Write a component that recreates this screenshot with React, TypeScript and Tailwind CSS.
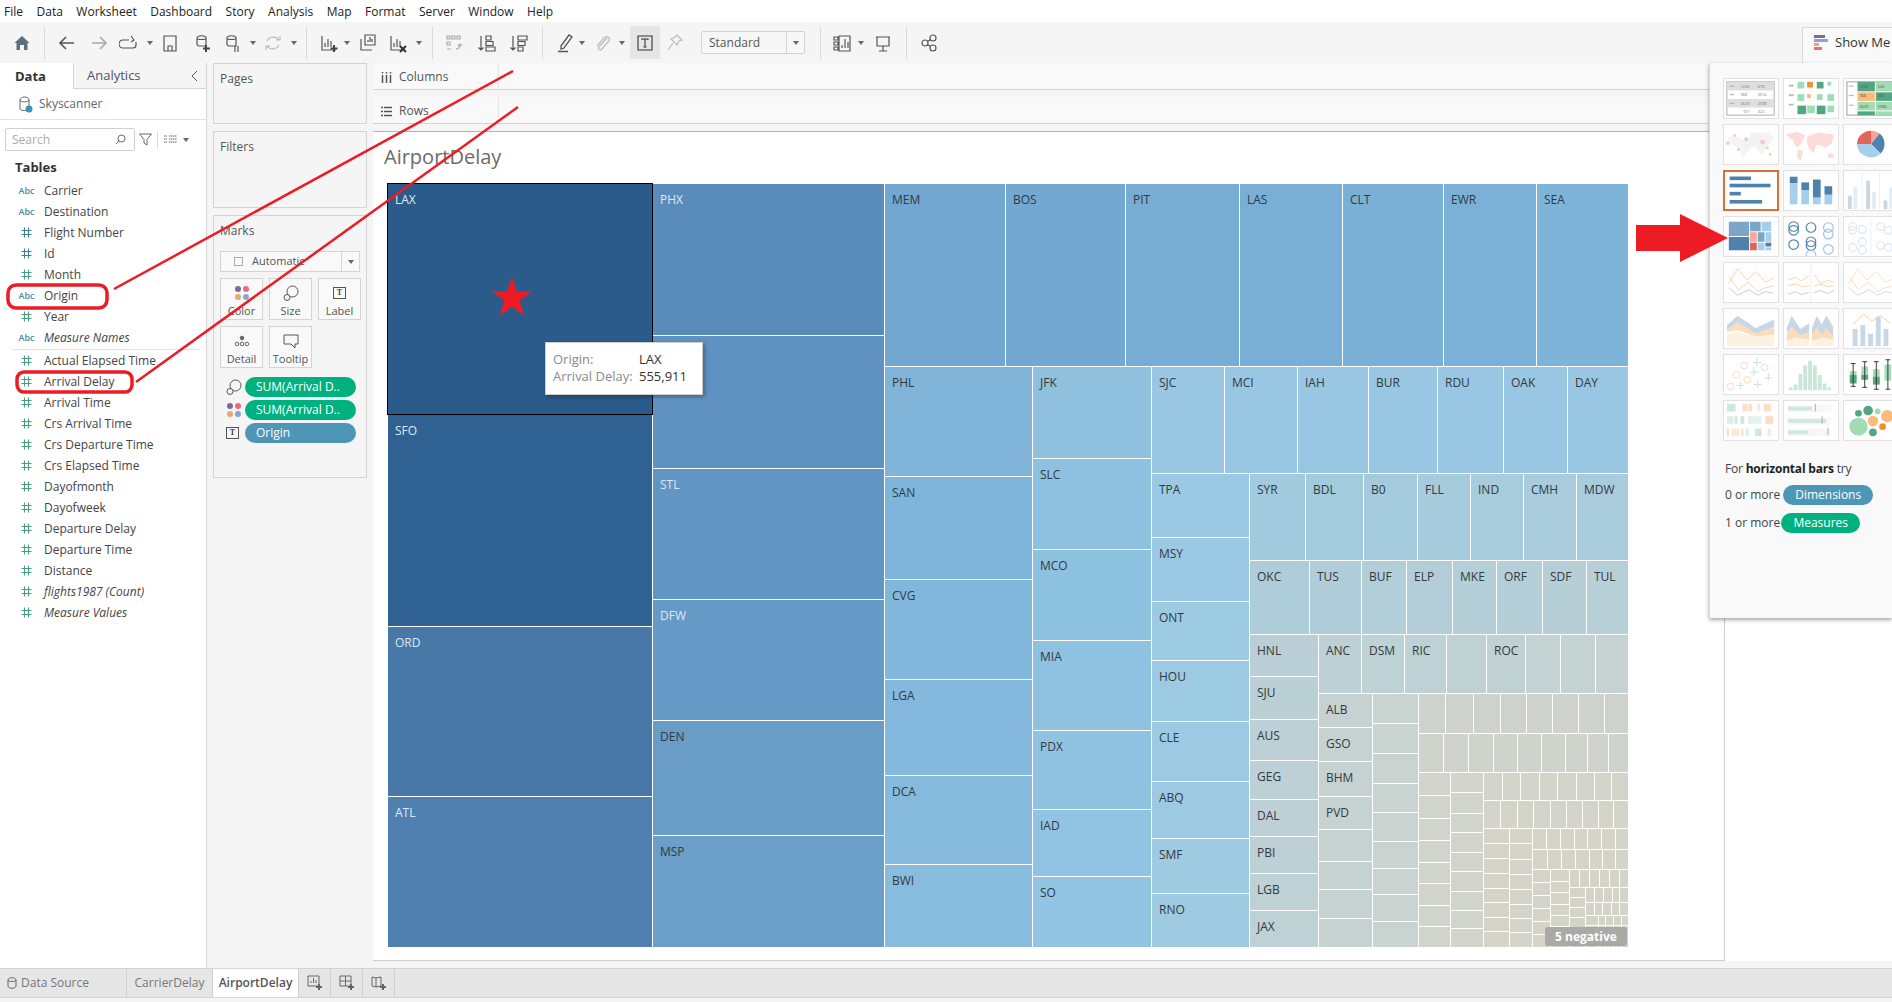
import type { ReactNode } from "react";

type Cell = { x: number; y: number; x2: number; y2: number; c: string; t?: string; light?: boolean };

const cells: Cell[] = [];

function rowOf(y: number, y2: number, xs: number[], colors: string | string[], labels: string[] = []) {
  for (let i = 0; i < xs.length - 1; i++) {
    const c = typeof colors === "string" ? colors : colors[i];
    cells.push({ x: xs[i], y, x2: xs[i + 1], y2, c, t: labels[i] });
  }
}

function colOf(x: number, x2: number, ys: number[], colors: string | string[], labels: string[] = [], light = 0) {
  for (let i = 0; i < ys.length - 1; i++) {
    const c = typeof colors === "string" ? colors : colors[i];
    cells.push({ x, y: ys[i], x2, y2: ys[i + 1], c, t: labels[i], light: i < light });
  }
}

// the bottom right corner was read off a 3x crop starting at 1240,620
const zx = (v: number[]) => v.map((n) => 1240 + n / 3);
const zy = (v: number[]) => v.map((n) => 620 + n / 3);
function zRow(y: number, y2: number, xs: number[], c: string, labels: string[] = []) {
  rowOf(620 + y / 3, 620 + y2 / 3, zx(xs), c, labels);
}
function zCol(x: number, x2: number, ys: number[], c: string, labels: string[] = []) {
  colOf(1240 + x / 3, 1240 + x2 / 3, zy(ys), c, labels);
}

colOf(388, 653, [184, 415, 627, 797, 947], ["#2b5b8a", "#2f6292", "#4878a8", "#4f80b0"], ["LAX", "SFO", "ORD", "ATL"], 4);
colOf(653, 885, [184, 336, 469, 600, 721, 836, 947], ["#5a8cbb", "#5f92c1", "#6195c3", "#6599c6", "#699cc7", "#6b9ec9"], ["PHX", "", "STL", "DFW", "DEN", "MSP"], 4);
rowOf(184, 367, [885, 1006, 1126, 1240, 1343, 1444, 1537, 1628], ["#71a7d0", "#72a8d1", "#77acd3", "#7aafd5", "#7bb0d6", "#7cb1d7", "#7fb4d9"], ["MEM", "BOS", "PIT", "LAS", "CLT", "EWR", "SEA"]);
colOf(885, 1033, [367, 477, 580, 680, 776, 865, 947], ["#80b5d9", "#7fb5da", "#82b7dc", "#84b9dd", "#86badd", "#88bcdf"], ["PHL", "SAN", "CVG", "LGA", "DCA", "BWI"]);
colOf(1033, 1152, [367, 459, 550, 641, 731, 810, 877, 947], ["#8fc1df", "#8ec1e0", "#8dc1e0", "#8fc2e1", "#90c3e2", "#91c3e3", "#92c4e3"], ["JFK", "SLC", "MCO", "MIA", "PDX", "IAD", "SO"]);
rowOf(367, 474, [1152, 1225, 1298, 1369, 1438, 1504, 1568, 1628], "#99c7e3", ["SJC", "MCI", "IAH", "BUR", "RDU", "OAK", "DAY"]);
colOf(1152, 1250, [474, 538, 602, 661, 722, 782, 839, 894, 947], ["#9bc9e3", "#9bc9e3", "#9ccae3", "#9ccae3", "#9dcae2", "#9dcae2", "#9ecbe2", "#9fcbe2"], ["TPA", "MSY", "ONT", "HOU", "CLE", "ABQ", "SMF", "RNO"]);
rowOf(474, 561, [1250, 1306, 1364, 1418, 1471, 1524, 1577, 1628], ["#a2cade", "#a3cbde", "#a4cbdd", "#a5cbdd", "#a7ccdc", "#a8ccdc", "#a9ccdc"], ["SYR", "BDL", "B0", "FLL", "IND", "CMH", "MDW"]);
rowOf(561, 635, [1250, 1310, 1362, 1407, 1453, 1497, 1543, 1587, 1628], ["#adcdda", "#b0ced9", "#b2ced8", "#b3ced8", "#b4cfd8", "#b5cfd8", "#b6cfd7", "#b7cfd7"], ["OKC", "TUS", "BUF", "ELP", "MKE", "ORF", "SDF", "TUL"]);
colOf(1250, 1318.5, [635, 677, 720, 761, 800, 837, 874, 911, 947], ["#b9cfd5", "#bbd0d5", "#bcd0d5", "#bcd0d5", "#bdd0d5", "#bdd0d5", "#bed1d5", "#bed1d5"], ["HNL", "SJU", "AUS", "GEG", "DAL", "PBI", "LGB", "JAX"]);
rowOf(635, 693.5, [1318.5, 1361.5, 1404.5, 1446.5, 1486.5, 1525.5, 1560.5, 1595.5, 1628], ["#bdd0d5", "#bed1d5", "#bed1d5", "#c0d1d4", "#c0d1d3", "#c3d2d2", "#c4d2d2", "#c5d2d1"], ["ANC", "DSM", "RIC", "", "ROC"]);
zCol(236, 398, [221, 325, 427, 532, 631, 727, 811, 898, 981], "#c6d2d1", ["ALB", "GSO", "BHM", "PVD"]);
zCol(398, 536, [221, 313, 403, 493, 580, 667, 748, 826, 905, 981], "#c9d3cf");
zRow(221, 343, [536, 617, 701, 782, 860, 938, 1016, 1094, 1164], "#cdd3cc");
zRow(343, 460, [536, 611, 686, 761, 833, 905, 977, 1043, 1106, 1164], "#cfd3cb");
zCol(536, 634, [460, 529, 598, 664, 730, 793, 859, 922, 981], "#d1d4ca");
zCol(634, 731, [460, 520, 583, 640, 700, 757, 817, 874, 928, 981], "#d1d4ca");
zRow(460, 544, [731, 788, 842, 899, 953, 1010, 1064, 1116, 1164], "#d3d4c9");
zRow(544, 626, [731, 782, 833, 881, 932, 980, 1028, 1077, 1122, 1164], "#d4d4c9");
zCol(731, 809, [626, 673, 718, 763, 808, 850, 895, 937, 981], "#d4d4c9");
zCol(809, 878, [626, 673, 721, 766, 811, 856, 898, 940, 981], "#d4d4c9");
zRow(626, 691, [878, 920, 962, 1004, 1043, 1085, 1128, 1164], "#d4d4c9");
zRow(691, 751, [878, 923, 965, 1007, 1049, 1088, 1128, 1164], "#d4d4c9");
zCol(878, 932, [751, 790, 829, 868, 907, 946, 981], "#d4d4c9");
zCol(932, 989, [751, 787, 820, 856, 889, 922, 952, 981], "#d4d4c9");
zRow(751, 805, [989, 1019, 1049, 1079, 1109, 1139, 1164], "#d4d4c9");
zCol(989, 1037, [805, 835, 865, 895, 925, 955, 981], "#d4d4c9");
zRow(805, 850, [1037, 1066, 1093, 1118, 1141, 1164], "#d4d4c9");
zRow(850, 889, [1037, 1064, 1088, 1115, 1139, 1164], "#d4d4c9");
zRow(889, 918, [1037, 1076, 1099, 1123, 1145, 1164], "#d4d4c9");
zRow(918, 981, [1037, 1076, 1099, 1123, 1145, 1164], "#d4d4c9");

function Treemap() {
  return (
    <svg width={1240} height={763} viewBox="388 184 1240 763" className="overflow-visible text-[12px]">
      {cells.map((k, i) => {
        const x = Math.round(k.x);
        const y = Math.round(k.y);
        const x2 = Math.round(k.x2);
        const y2 = Math.round(k.y2);
        return (
          <g key={i}>
            <rect x={x} y={y} width={x2 - x - (x2 >= 1628 ? 0 : 1)} height={y2 - y - (y2 >= 947 ? 0 : 1)} fill={k.c} />
            {k.t ? (
              <text x={x + 7} y={y + 20} fill={k.light ? "#dfe8f1" : "#333a40"}>
                {k.t}
              </text>
            ) : null}
          </g>
        );
      })}
      <rect x={387.5} y={183.5} width={265} height={231} fill="none" stroke="#000" strokeWidth={1} />
    </svg>
  );
}

function Hash({ color = "#4d9a82" }: { color?: string }) {
  return (
    <svg width={11} height={11} viewBox="0 0 11 11" stroke={color} strokeWidth={1.1}>
      <path d="M3.5 0.5v10M7.5 0.5v10M0.5 3.5h10M0.5 7.5h10" />
    </svg>
  );
}

function Abc() {
  return <span className="text-[9px] font-semibold text-[#4a87a3] leading-none">Abc</span>;
}

function Field({ name, kind, italic }: { name: string; kind: "abc" | "hash" | "blue"; italic?: boolean }) {
  return (
    <div className="flex items-center h-[21px]">
      <span className="w-[44px] pl-[18px] flex justify-center pr-[9px] shrink-0">
        {kind === "abc" ? <Abc /> : <Hash color={kind === "blue" ? "#3f7f95" : "#4d9a82"} />}
      </span>
      <span className={italic ? "italic text-[#444]" : "text-[#444]"}>{name}</span>
    </div>
  );
}

function ColorDots() {
  return (
    <svg width={16} height={16} viewBox="0 0 16 16">
      <circle cx={4} cy={4} r={3} fill="#7b6a9b" />
      <circle cx={12} cy={4} r={3} fill="#ef6a7d" />
      <circle cx={4} cy={12} r={3} fill="#f2a66f" />
      <circle cx={12} cy={12} r={3} fill="#84a6cf" />
    </svg>
  );
}

function SizeIcon() {
  return (
    <svg width={16} height={16} viewBox="0 0 16 16" fill="none" stroke="#555" strokeWidth={1}>
      <circle cx={9.5} cy={6.5} r={5.5} />
      <circle cx={4} cy={12.5} r={3} fill="#f5f5f5" />
    </svg>
  );
}

function LabelIcon() {
  return (
    <span className="w-[13px] h-[12px] border border-[#555] flex items-center justify-center text-[8px] font-['Liberation_Serif',serif] font-bold text-[#444] leading-none">
      T
    </span>
  );
}

function MarkBtn({ name, icon }: { name: string; icon: ReactNode }) {
  return (
    <div className="w-[43px] h-[42px] border border-[#d4d4d4] bg-[#f9f9f9] flex flex-col items-center justify-between pt-[6px] pb-[3px] text-[11px] text-[#555] leading-none">
      <span className="h-[16px] flex items-center justify-center">{icon}</span>
      <span>{name}</span>
    </div>
  );
}

function Pill({ text, green, icon }: { text: string; green?: boolean; icon: ReactNode }) {
  return (
    <div className="flex items-center h-[20px] mb-[3px]">
      <span className="w-[25px] pl-[6px] shrink-0 flex items-center">{icon}</span>
      <span
        className={
          green
            ? "w-[111px] h-[20px] rounded-full bg-[#00b180] text-white pl-[11px] leading-[20px]"
            : "w-[111px] h-[20px] rounded-full bg-[#4e96b5] text-white pl-[11px] leading-[20px]"
        }
      >
        {text}
      </span>
    </div>
  );
}

function Caret({ w = 8 }: { w?: number }) {
  return (
    <span className="flex justify-center shrink-0" style={{ width: w }}>
      <svg width={6} height={4} viewBox="0 0 6 4" fill="#666" className="shrink-0">
        <path d="M0 0h6L3 4z" />
      </svg>
    </span>
  );
}

function Sep() {
  return <span className="w-px h-[32px] bg-[#d9d9d9] shrink-0" />;
}

function Ico({ w, children }: { w: number; children: ReactNode }) {
  return (
    <span className="flex justify-center items-center shrink-0" style={{ width: w }}>
      <svg width={20} height={20} viewBox="0 0 20 20" fill="none" stroke="#555" strokeWidth={1.2}>
        {children}
      </svg>
    </span>
  );
}

function Toolbar() {
  return (
    <div className="h-[41px] bg-[#f5f5f5] flex items-center shrink-0 relative">
      <Ico w={44}>
        <path d="M2.500 10 10 3l7.500 7h-2v7h-3.500v-5h-4v5H4.500v-7z" fill="#5b6f80" stroke="none" />
      </Ico>
      <Sep />
      <Ico w={44}>
        <path d="M17 10H3M9 4l-6 6 6 6" strokeWidth={1.6} stroke="#555" />
      </Ico>
      <Ico w={20}>
        <path d="M3 10h14M11 4l6 6-6 6" strokeWidth={1.6} stroke="#aaa" />
      </Ico>
      <Ico w={40}>
        <path d="M10 7H4a3 3 0 0 0 0 8h10a3 3 0 0 0 3-3V9M12 3l3 4-3 2" />
      </Ico>
      <Caret w={2} />
      <Ico w={38}>
        <path d="M4 3h12v15H4zM8 18v-5h4v5" />
      </Ico>
      <Ico w={28}>
        <path d="M4 5c0-3 9-3 9 0v8H8c-2 0-4 0-4-2zM4 5c0 2 9 2 9 0" />
        <path d="M13 12v7M10 15.500h7" strokeWidth={2} stroke="#444" />
      </Ico>
      <Ico w={32}>
        <path d="M4 5c0-3 9-3 9 0v8H8c-2 0-4 0-4-2zM4 5c0 2 9 2 9 0" />
        <path d="M12 13v6M15 13v6" />
      </Ico>
      <Caret w={8} />
      <Ico w={32}>
        <path d="M16 7A7 7 0 0 0 4 8M4 13a7 7 0 0 0 12-1M13 7h4V3M7 13H3v4" stroke="#bbb" />
      </Ico>
      <Caret w={10} />
      <span className="w-[7px] shrink-0" />
      <Sep />
      <span className="w-[6px] shrink-0" />
      <Ico w={32}>
        <path d="M3 3v14h14M6 14v-4M9 14V6M12 14V8" />
        <path d="M15 12v7M11.500 15.500h7" strokeWidth={2} stroke="#444" />
      </Ico>
      <Caret w={4} />
      <Ico w={38}>
        <path d="M7 2h10v10H7zM3 6v11h11M10 9V7M12 9V4M14 9V6" />
      </Ico>
      <Ico w={22}>
        <path d="M3 3v14h14M6 14v-4M9 14V6M12 14V8" />
        <path d="m12 13 6 6M18 13l-6 6" strokeWidth={2} stroke="#333" />
      </Ico>
      <Caret w={20} />
      <span className="w-[3px] shrink-0" />
      <Sep />
      <Ico w={42}>
        <path d="M3 3h3v3H3zM8 3h3v3H8zM13 3h3v3h-3zM3 9h3v3H3zM12 16c3 0 4-2 4-5M14 13l2-2 2 2M7 16H3" stroke="#aaa" />
      </Ico>
      <Ico w={24}>
        <path d="M4 3v14M1.500 14.500 4 17l2.500-2.500M9 3h5v4H9zM9 8.500h7v4H9zM9 14h9v4H9z" />
      </Ico>
      <Ico w={40}>
        <path d="M4 3v14M1.500 14.500 4 17l2.500-2.500M9 3h9v4H9zM9 8.500h7v4H9zM9 14h5v4H9z" />
      </Ico>
      <span className="w-[3px] shrink-0" />
      <Sep />
      <span className="w-[6px] shrink-0" />
      <Ico w={32}>
        <path d="M6 13 14 2l3 2-8 11-3 1zM3 18.500h10" strokeWidth={1.3} />
      </Ico>
      <Caret w={2} />
      <Ico w={38}>
        <path d="m15 5-8 9c-2 2 1 4 3 2l7-8c2-3-2-6-5-3l-7 8" stroke="#bbb" />
      </Ico>
      <Caret w={2} />
      <span className="w-[30px] h-[33px] ml-[7px] bg-[#e6e6e6] flex items-center justify-center shrink-0">
        <svg width={16} height={16} viewBox="0 0 16 16" fill="none" stroke="#333" strokeWidth={1.1}>
          <path d="M1 1h14v14H1zM5 5V4h6v1M8 4v8M6.500 12h3" />
        </svg>
      </span>
      <Ico w={30}>
        <path d="m12 2 5 5-3 1-2 4-6-6 4-2zM8 10l-5 7" stroke="#bbb" />
      </Ico>
      <div className="ml-[11px] w-[104px] h-[23px] border border-[#d4d4d4] rounded-[2px] flex items-center text-[#555] bg-[#f7f7f7] shrink-0">
        <span className="pl-[7px] flex-1">Standard</span>
        <span className="w-[18px] h-full border-l border-[#d4d4d4] flex items-center justify-center">
          <Caret />
        </span>
      </div>
      <span className="w-[15px] shrink-0" />
      <Sep />
      <span className="w-[5px] shrink-0" />
      <Ico w={34}>
        <path d="M1 4h4v3H1zM1 9h4v3H1zM1 14h4v3H1zM6 3h11v15H6zM9 15v-3M12 15V6M15 15V9" />
      </Ico>
      <Caret w={2} />
      <Ico w={42}>
        <path d="M3 4h14M4 4v9h12V4M10 13v5M6 18h8" />
      </Ico>
      <span className="w-[2px] shrink-0" />
      <Sep />
      <Ico w={44}>
        <circle cx={6} cy={10} r={3} />
        <circle cx={14} cy={5} r={3} />
        <circle cx={14} cy={15} r={3} />
        <path d="m8.500 8.500 3-2M8.500 11.500l3 2" />
      </Ico>
      <div className="absolute right-0 bottom-0 w-[90px] h-[36px] bg-[#f9f9f9] border-l border-t border-[#d9d9d9] flex items-center pl-[11px] pb-[6px] text-[13px] text-[#333]">
        <svg width={15} height={16} viewBox="0 0 15 16" className="mr-[6px] shrink-0">
          <rect x={0} y={0} width={11} height={3} fill="#7b6a9b" />
          <rect x={0} y={4} width={14} height={3} fill="#84a6cf" />
          <rect x={0} y={8} width={5} height={3} fill="#f2a66f" />
          <rect x={0} y={12} width={8} height={3} fill="#ef6a7d" />
        </svg>
        Show Me
      </div>
    </div>
  );
}

const B = "#4f82ab";
const LB = "#a6cfee";
const R = "#e2635a";
const GD = "#52a783";
const GL = "#a1dcb5";
const Or = "#f28e2b";
const OL = "#fbb97e";

function Thumb({ children, active }: { children: ReactNode; active?: boolean }) {
  return (
    <div className={active ? "w-[56px] h-[41px] border-2 border-[#de6c35] bg-white" : "w-[56px] h-[41px] border border-[#e2e2e2] bg-white"}>
      <svg width="100%" height="100%" viewBox="0 0 56 41" preserveAspectRatio="none" className="block">
        {children}
      </svg>
    </div>
  );
}

function Bx({ x, y, w, h, f }: { x: number; y: number; w: number; h: number; f: string }) {
  return <rect x={x} y={y} width={w} height={h} fill={f} />;
}

function Lines({ faint }: { faint?: boolean }) {
  const o = faint ? 0.45 : 0.6;
  return (
    <g fill="none" strokeWidth={1} opacity={o}>
      <path d="M5 22 14 6l10 12 9-9 10 11 9-4" stroke="#f5b77f" />
      <path d="M5 14l10 14 10-8 10 10 8-4 9-2" stroke="#f5b77f" />
      <path d="M5 26l9 8 12-6 9 6 8-4 8 2" stroke="#8fb0d1" />
    </g>
  );
}

function ShowMePanel() {
  return (
    <div className="absolute left-[1709px] top-[63px] w-[183px] h-[555px] bg-[#f9f9f9] border-l border-[#d9d9d9] shadow-[0_2px_4px_rgba(0,0,0,0.35)] overflow-hidden pl-[13px] pt-[15px]">
      <div className="grid grid-cols-[56px_56px_56px] gap-x-[4px] gap-y-[5px] w-[176px]">
        <Thumb>
          <rect x={3} y={3} width={49} height={35} fill="none" stroke="#aaa" />
          <Bx x={3} y={3} w={49} h={9} f="#dedede" />
          <Bx x={3} y={21} w={49} h={9} f="#dedede" />
          <Bx x={6} y={7} w={5} h={1} f="#aaa" />
          <Bx x={6} y={16} w={5} h={1} f="#aaa" />
          <Bx x={6} y={25} w={5} h={1} f="#aaa" />
          <g fontSize={4} fill="#777">
            <text x={17} y={9}>1234</text>
            <text x={35} y={9}>678</text>
            <text x={17} y={18}>368</text>
            <text x={35} y={18}>3014</text>
            <text x={17} y={27}>2629</text>
            <text x={35} y={27}>2598</text>
            <text x={20} y={36}>971</text>
            <text x={35} y={36}>322</text>
          </g>
        </Thumb>
        <Thumb>
          <Bx x={5} y={6} w={5} h={2} f="#bbb" />
          <Bx x={5} y={16} w={5} h={2} f="#bbb" />
          <Bx x={5} y={26} w={5} h={2} f="#bbb" />
          <Bx x={14} y={3} w={7} h={7} f={GL} />
          <Bx x={24} y={3} w={6} h={6} f={Or} />
          <Bx x={34} y={3} w={7} h={7} f={GD} />
          <Bx x={45} y={3} w={4} h={4} f={GL} />
          <Bx x={14} y={16} w={7} h={7} f={GL} />
          <Bx x={24} y={16} w={4} h={4} f={OL} />
          <Bx x={34} y={16} w={6} h={6} f={GL} />
          <Bx x={45} y={16} w={7} h={7} f={GL} />
          <Bx x={14} y={28} w={9} h={9} f={GD} />
          <Bx x={24} y={28} w={8} h={8} f={GL} />
          <Bx x={34} y={28} w={9} h={9} f={GD} />
          <Bx x={45} y={28} w={7} h={7} f={GL} />
        </Thumb>
        <Thumb>
          <rect x={3} y={3} width={52} height={35} fill="none" stroke="#999" />
          <Bx x={5} y={7} w={5} h={1} f="#aaa" />
          <Bx x={5} y={17} w={5} h={1} f="#aaa" />
          <Bx x={5} y={27} w={5} h={1} f="#aaa" />
          <Bx x={14} y={3} w={18} h={10} f={GD} />
          <Bx x={33} y={3} w={22} h={10} f={GL} />
          <Bx x={14} y={14} w={18} h={9} f={OL} />
          <Bx x={33} y={14} w={22} h={9} f={GD} />
          <Bx x={14} y={24} w={18} h={9} f={GL} />
          <Bx x={33} y={24} w={22} h={9} f={GL} />
          <Bx x={14} y={34} w={18} h={4} f={GD} />
          <Bx x={33} y={34} w={22} h={4} f={GL} />
          <g fontSize={4} fill="#555">
            <text x={16} y={9}>1234</text>
            <text x={35} y={9}>546</text>
            <text x={16} y={19}>368</text>
            <text x={35} y={19}>380</text>
            <text x={16} y={30}>2629</text>
            <text x={35} y={30}>5984</text>
          </g>
        </Thumb>
        <Thumb>
          <path d="M3 12h12l4 4 6-2 4-6h18l5 6-8 10-5 8-7-10-6 4-6 8-6-10-7-4z" fill="#f3f3f3" />
          <g fill="#f3c9c6">
            <circle cx={4} cy={19} r={2} />
            <circle cx={23} cy={15} r={2} />
            <circle cx={40} cy={18} r={2.500} />
            <circle cx={11} cy={11} r={1.500} />
            <circle cx={15} cy={26} r={1.500} />
            <circle cx={45} cy={24} r={1.500} />
            <circle cx={48} cy={31} r={1.500} />
          </g>
        </Thumb>
        <Thumb>
          <path d="M2 10 14 7l8 4-5 10-4 3-4-8zM14 26l6 1-3 11-3-4zM24 12l12-4 16 2-3 10-6 4-6-3-4 0-2 9-5-5-2-6z" fill="#fbdcdb" />
          <path d="M45 30l6 0 1 4-6 1z" fill="#fbdcdb" />
        </Thumb>
        <Thumb>
          <path d="M28 20 V6 A14.500 14.500 0 0 0 13.500 20 z" fill={R} />
          <path d="M28 20 V6 A14.500 14.500 0 0 1 37 9 z" fill="#f6a19b" />
          <path d="M28 20 L37 9 A14.500 14.500 0 0 1 38 30 z" fill={B} />
          <path d="M28 20 L38 30 A14.500 14.500 0 0 1 13.500 20 z" fill={LB} />
        </Thumb>
        <Thumb active>
          <Bx x={5} y={5} w={23} h={4} f={B} />
          <Bx x={5} y={13} w={44} h={4} f={B} />
          <Bx x={5} y={22} w={12} h={4} f={B} />
          <Bx x={5} y={31} w={35} h={4} f={B} />
        </Thumb>
        <Thumb>
          <Bx x={6} y={6} w={8} h={7} f={B} />
          <Bx x={6} y={13} w={8} h={22} f={LB} />
          <Bx x={18} y={12} w={8} h={8} f={B} />
          <Bx x={18} y={20} w={8} h={15} f={LB} />
          <Bx x={30} y={9} w={8} h={19} f={B} />
          <Bx x={30} y={28} w={8} h={7} f={LB} />
          <Bx x={42} y={16} w={8} h={9} f={B} />
          <Bx x={42} y={25} w={8} h={10} f={LB} />
        </Thumb>
        <Thumb>
          <path d="M19 1v40M37 1v40" stroke="#eee" />
          <Bx x={4} y={26} w={4} h={14} f="#c9d6e4" />
          <Bx x={10} y={17} w={4} h={23} f="#e2edf8" />
          <Bx x={23} y={10} w={4} h={30} f="#c9d6e4" />
          <Bx x={29} y={22} w={4} h={18} f="#e2edf8" />
          <Bx x={41} y={31} w={4} h={9} f="#c9d6e4" />
          <Bx x={47} y={17} w={4} h={23} f="#e2edf8" />
        </Thumb>
        <Thumb>
          <Bx x={5} y={5} w={21} h={15} f="#7ba6ca" />
          <Bx x={5} y={21} w={21} h={14} f={B} />
          <Bx x={27} y={5} w={11} h={10} f="#7ba6ca" />
          <Bx x={39} y={5} w={10} h={10} f={LB} />
          <Bx x={27} y={16} w={7} h={10} f="#fba69e" />
          <Bx x={35} y={16} w={7} h={10} f="#7ba6ca" />
          <Bx x={43} y={16} w={6} h={10} f={LB} />
          <Bx x={27} y={27} w={7} h={8} f={R} />
          <Bx x={35} y={27} w={7} h={8} f={LB} />
          <Bx x={43} y={27} w={6} h={4} f={B} />
          <Bx x={43} y={32} w={6} h={3} f={LB} />
        </Thumb>
        <Thumb>
          <g fill="none" stroke={B} strokeWidth={1.2}>
            <circle cx={10} cy={10} r={5} />
            <circle cx={10} cy={14} r={5} />
            <circle cx={28} cy={11} r={5} />
            <circle cx={10} cy={29} r={5} />
            <circle cx={28} cy={26} r={5} />
            <circle cx={28} cy={30} r={5} />
          </g>
          <g fill="none" stroke="#9cc3e6" strokeWidth={1.2}>
            <circle cx={46} cy={11} r={5} />
            <circle cx={46} cy={18} r={5} />
            <circle cx={46} cy={34} r={5} />
            <circle cx={28} cy={40} r={5} />
          </g>
        </Thumb>
        <Thumb>
          <path d="M28 1v40" stroke="#eee" />
          <g fill="none" stroke="#dbe6f2" strokeWidth={1.2}>
            <circle cx={9} cy={10} r={4} />
            <circle cx={9} cy={14} r={4} />
            <circle cx={19} cy={13} r={4} />
            <circle cx={19} cy={26} r={4} />
            <circle cx={9} cy={32} r={4} />
            <circle cx={19} cy={35} r={4} />
            <circle cx={38} cy={10} r={4} />
            <circle cx={46} cy={14} r={4} />
            <circle cx={38} cy={30} r={4} />
            <circle cx={46} cy={32} r={4} />
          </g>
        </Thumb>
        <Thumb>
          <Lines />
        </Thumb>
        <Thumb>
          <path d="M28 1v40" stroke="#eee" />
          <g fill="none" strokeWidth={1} opacity={0.6}>
            <path d="M4 18l8-3 6 4 8-6M31 12l7 10 7-4 7 2" stroke="#f5b77f" />
            <path d="M4 24l8-2 6 3 8-1M31 24l7-2 7 3 7-1" stroke="#f5b77f" />
            <path d="M4 33l8-3 6 3 8-2M31 31l7-2 7 3 7-3" stroke="#8fb0d1" />
          </g>
        </Thumb>
        <Thumb>
          <Lines faint />
        </Thumb>
        <Thumb>
          <path d="M3 17 14 7l19 13 19-9v8l-19 7L14 14 3 22z" fill="#c7d7e7" />
          <path d="M3 22 14 14l19 12 19-7v8l-19 2-19-7-11 2z" fill="#fbdcb9" />
          <path d="M3 27 14 24l19 5 19-2v12H3z" fill="#fef1e1" />
        </Thumb>
        <Thumb>
          <path d="M3 20 8 7l9 14 9-6v9l-9 4-9-9-5 7zM29 20l5-13 5 9 5-9 7 12v9l-7-5-5 5-5-8-5 7z" fill="#c7d7e7" />
          <path d="M3 27l5-8 9 9 9-4v15H3zM29 27l5-8 5 8 5-7 7 8v11H29z" fill="#fbdcb9" />
          <path d="M3 33l9-3 14 2v7H3zM29 33l11-3 11 2v7H29z" fill="#fef1e1" />
        </Thumb>
        <Thumb>
          <Bx x={9} y={21} w={5} h={18} f="#c7d7e7" />
          <Bx x={17} y={17} w={5} h={22} f="#c7d7e7" />
          <Bx x={25} y={26} w={5} h={13} f="#c7d7e7" />
          <Bx x={33} y={8} w={5} h={31} f="#c7d7e7" />
          <Bx x={41} y={21} w={5} h={18} f="#c7d7e7" />
          <path d="M10 16 20 5l9 8 9-6 10 8" fill="none" stroke="#f9cfa0" strokeWidth={1} />
        </Thumb>
        <Thumb>
          <g fill="none" stroke="#fbd9b4" strokeWidth={1}>
            <circle cx={21} cy={11} r={3.500} />
            <circle cx={42} cy={13} r={3.500} />
            <circle cx={13} cy={21} r={3.500} />
            <circle cx={24} cy={26} r={3.500} />
            <circle cx={7} cy={33} r={3.500} />
          </g>
          <path d="M34 3v9M30 8h9M31 13v9M27 18h9M46 19v8M42 24h8M17 28v8M13 32h8M35 27v8M31 31h8" stroke="#c9e3d8" fill="none" />
        </Thumb>
        <Thumb>
          <g fill="#cbe6d8">
            <Bx x={5} y={34} w={4} h={3} f="#cbe6d8" />
            <Bx x={10} y={31} w={4} h={6} f="#cbe6d8" />
            <Bx x={15} y={20} w={4} h={17} f="#cbe6d8" />
            <Bx x={20} y={11} w={4} h={26} f="#cbe6d8" />
            <Bx x={25} y={6} w={4} h={31} f="#cbe6d8" />
            <Bx x={30} y={11} w={4} h={26} f="#cbe6d8" />
            <Bx x={35} y={21} w={4} h={16} f="#cbe6d8" />
            <Bx x={40} y={30} w={4} h={7} f="#cbe6d8" />
            <Bx x={45} y={34} w={4} h={3} f="#cbe6d8" />
          </g>
        </Thumb>
        <Thumb>
          <Bx x={6} y={17} w={7} h={11} f={GL} />
          <Bx x={6} y={21} w={7} h={9} f={GD} />
          <Bx x={18} y={12} w={7} h={13} f={GL} />
          <Bx x={18} y={21} w={7} h={5} f={GD} />
          <Bx x={30} y={15} w={7} h={16} f={GL} />
          <Bx x={30} y={23} w={7} h={8} f={GD} />
          <Bx x={42} y={10} w={7} h={17} f={GL} />
          <path d="M9.500 9v24M7 9h5M7 33h5M21.500 7v27M19 7h5M19 34h5M33.500 7v29M31 7h5M31 36h5M45.500 5v31M43 5h5M43 36h5" stroke="#333" fill="none" />
        </Thumb>
        <Thumb>
          <g>
            <Bx x={3} y={3} w={9} h={8} f="#cfe8de" />
            <Bx x={19} y={3} w={5} h={8} f="#fbe0c7" />
            <Bx x={25} y={3} w={4} h={8} f="#fbe0c7" />
            <Bx x={35} y={3} w={2} h={8} f="#fbe0c7" />
            <Bx x={41} y={3} w={8} h={8} f="#fbe0c7" />
            <Bx x={3} y={16} w={7} h={8} f="#dcefe6" />
            <Bx x={11} y={16} w={3} h={8} f="#cfe8de" />
            <Bx x={17} y={16} w={4} h={8} f="#cfe8de" />
            <Bx x={25} y={16} w={14} h={8} f="#e3f2ea" />
            <Bx x={43} y={16} w={8} h={8} f="#fbdcc0" />
            <Bx x={3} y={29} w={2} h={8} f="#cfe8de" />
            <Bx x={8} y={29} w={8} h={8} f="#fde9d7" />
            <Bx x={18} y={29} w={2} h={8} f="#fbdcc0" />
            <Bx x={22} y={29} w={4} h={8} f="#e3f2ea" />
            <Bx x={32} y={29} w={7} h={8} f="#cfe8de" />
            <Bx x={45} y={29} w={4} h={8} f="#fde9d7" />
          </g>
        </Thumb>
        <Thumb>
          <Bx x={4} y={4} w={45} h={8} f="#f7f7f7" />
          <Bx x={4} y={6} w={25} h={4} f="#cfe8de" />
          <Bx x={32} y={3} w={1} h={8} f="#aaa" />
          <Bx x={4} y={17} w={45} h={8} f="#f7f7f7" />
          <Bx x={4} y={19} w={40} h={4} f="#cfe8de" />
          <Bx x={39} y={16} w={1} h={8} f="#aaa" />
          <Bx x={4} y={29} w={45} h={8} f="#f7f7f7" />
          <Bx x={4} y={31} w={21} h={4} f="#cfe8de" />
          <Bx x={45} y={28} w={1} h={8} f="#aaa" />
        </Thumb>
        <Thumb>
          <circle cx={15} cy={27} r={9.500} fill={GL} />
          <circle cx={15} cy={13} r={3.500} fill={GD} />
          <circle cx={25} cy={10} r={5} fill={GD} />
          <circle cx={35} cy={11} r={3} fill={GL} />
          <circle cx={30} cy={21} r={5.500} fill={OL} />
          <circle cx={40} cy={27} r={3.500} fill={Or} />
          <circle cx={30} cy={33} r={4} fill={GD} />
          <circle cx={45} cy={16} r={6.500} fill={OL} />
        </Thumb>
      </div>
      <div className="mt-[18px] ml-[2px] text-[#444] leading-[20px] tracking-[-0.2px]">
        For <span className="font-bold text-[#222]">horizontal bars</span> try
      </div>
      <div className="mt-[6px] ml-[2px] flex items-center h-[20px] text-[#444]">
        0 or more
        <span className="ml-[3px] w-[90px] h-[20px] rounded-full bg-[#4e96b5] text-white text-center leading-[20px]">Dimensions</span>
      </div>
      <div className="mt-[8px] ml-[2px] flex items-center h-[20px] text-[#444]">
        1 or more
        <span className="ml-[1px] w-[79px] h-[20px] rounded-full bg-[#00b180] text-white text-center leading-[20px]">Measures</span>
      </div>
    </div>
  );
}

function Tab({ children, active, w }: { children: ReactNode; active?: boolean; w: string }) {
  return (
    <div
      className={
        active
          ? `${w} h-full bg-white border-r border-[#d0d0d0] flex items-center justify-center font-semibold text-[#555]`
          : `${w} h-full border-r border-[#d0d0d0] flex items-center justify-center text-[#777]`
      }
    >
      {children}
    </div>
  );
}

function Annotations() {
  return (
    <svg width={1892} height={1002} viewBox="0 0 1892 1002" className="absolute left-0 top-0 pointer-events-none" fill="none" stroke="#ed1c24" strokeWidth={2.500}>
      <path d="M114 289 513 71" />
      <path d="M136 382 518 107" />
      <rect x={8} y={285} width={99} height={23} rx={8} strokeWidth={3.500} />
      <rect x={17} y={372} width={115} height={20} rx={7} strokeWidth={3.500} />
      <path d="M512 277l4.800 14.200h15.200l-12.200 9.200 4.400 15-12.200-8.800-12.200 8.800 4.400-15-12.200-9.200h15.200z" fill="#ed1c24" stroke="none" />
      <path d="M1636 225h44v-11l48 24-48 24v-11h-44z" fill="#ed1c24" stroke="none" />
    </svg>
  );
}

const menus = ["File", "Data", "Worksheet", "Dashboard", "Story", "Analysis", "Map", "Format", "Server", "Window", "Help"];

export default function App() {
  return (
    <div className="relative w-[1892px] h-[1002px] overflow-hidden flex flex-col bg-white text-[12px] font-['Open_Sans',sans-serif]">
      <div className="h-[22px] flex items-center gap-[13.5px] pl-[4px] pt-[1px] text-[#222] shrink-0">
        {menus.map((m) => (
          <span key={m}>{m}</span>
        ))}
      </div>
      <Toolbar />
      <div className="h-[905px] flex shrink-0">
        <div className="w-[207px] border-r border-[#d4d4d4] shrink-0">
          <div className="h-[26px] flex">
            <div className="w-[74px] border-r border-[#d4d4d4] pl-[15px] flex items-center font-bold text-[#333] text-[13px] pt-[1px]">Data</div>
            <div className="flex-1 bg-[#f5f5f5] border-b border-[#d4d4d4] pl-[13px] pr-[7px] pt-[1px] flex items-center justify-between text-[13px] text-[#555]">
              Analytics
              <svg width={8} height={12} viewBox="0 0 8 12" fill="none" stroke="#555">
                <path d="M6 1 1 6l5 5" />
              </svg>
            </div>
          </div>
          <div className="h-[31px] border-b border-[#e3e3e3] flex items-center pl-[19px] text-[#666]">
            <svg width={14} height={17} viewBox="0 0 14 17" className="mr-[6px]" fill="none" stroke="#666">
              <path d="M1 4c0-4 9-4 9 0v9c0 2-9 2-9 0zM1 4c0 2.500 9 2.500 9 0" />
              <circle cx={10} cy={13} r={3.500} fill="#3f8fc0" stroke="none" />
            </svg>
            Skyscanner
          </div>
          <div className="flex items-center mt-[8px] pl-[5px]">
            <div className="w-[130px] h-[23px] border border-[#d0d0d0] rounded-[2px] flex items-center justify-between pl-[6px] pr-[8px] text-[#aaa]">
              Search
              <svg width={11} height={11} viewBox="0 0 11 11" fill="none" stroke="#666">
                <circle cx={6.500} cy={4.500} r={3.500} />
                <path d="M4 7 1 10" />
              </svg>
            </div>
            <svg width={13} height={13} viewBox="0 0 13 13" fill="none" stroke="#666" className="ml-[4px]">
              <path d="M0.500 1h12L8 6.500V12L5 10V6.500z" />
            </svg>
            <span className="w-px h-[18px] bg-[#ddd] ml-[5px]" />
            <svg width={13} height={10} viewBox="0 0 13 10" stroke="#666" className="ml-[6px]">
              <path d="M0 1h3M5 1h8M0 4h3M5 4h8M0 7h3M5 7h8" strokeDasharray="1.500 0.500" />
            </svg>
            <span className="ml-[5px]">
              <Caret />
            </span>
          </div>
          <div className="mt-[6px] pl-[15px] h-[22px] flex items-center font-bold text-[13px] text-[#333]">Tables</div>
          <div className="mt-[1px]">
            <Field name="Carrier" kind="abc" />
            <Field name="Destination" kind="abc" />
            <Field name="Flight Number" kind="blue" />
            <Field name="Id" kind="blue" />
            <Field name="Month" kind="hash" />
            <Field name="Origin" kind="abc" />
            <Field name="Year" kind="hash" />
            <Field name="Measure Names" kind="abc" italic />
            <div className="ml-[12px] mr-[6px] border-t border-[#e3e3e3] mt-[1px]" />
            <Field name="Actual Elapsed Time" kind="hash" />
            <Field name="Arrival Delay" kind="hash" />
            <Field name="Arrival Time" kind="hash" />
            <Field name="Crs Arrival Time" kind="hash" />
            <Field name="Crs Departure Time" kind="hash" />
            <Field name="Crs Elapsed Time" kind="hash" />
            <Field name="Dayofmonth" kind="hash" />
            <Field name="Dayofweek" kind="hash" />
            <Field name="Departure Delay" kind="hash" />
            <Field name="Departure Time" kind="hash" />
            <Field name="Distance" kind="hash" />
            <Field name="flights1987 (Count)" kind="hash" italic />
            <Field name="Measure Values" kind="hash" italic />
          </div>
        </div>
        <div className="w-[166px] bg-[#f5f5f5] px-[6px] flex flex-col gap-[7px] shrink-0 text-[#555]">
          <div className="h-[61px] border border-[#d4d4d4] pl-[6px] pt-[6px]">Pages</div>
          <div className="h-[77px] border border-[#d4d4d4] pl-[6px] pt-[6px]">Filters</div>
          <div className="h-[263px] border border-[#d4d4d4] pl-[6px] pt-[6px]">
            <div className="h-[26px]">Marks</div>
            <div className="w-[140px] h-[21px] border border-[#d4d4d4] bg-[#f9f9f9] flex items-center mb-[6px] mt-[3px] text-[11px]">
              <span className="w-[9px] h-[9px] border border-[#aaa] ml-[13px] mr-[9px]" />
              <span className="flex-1">Automatic</span>
              <span className="w-[18px] h-full border-l border-[#d4d4d4] flex items-center justify-center">
                <Caret />
              </span>
            </div>
            <div className="grid grid-cols-[43px_43px_43px] gap-x-[6px] gap-y-[6px]">
              <MarkBtn name="Color" icon={<ColorDots />} />
              <MarkBtn name="Size" icon={<SizeIcon />} />
              <MarkBtn name="Label" icon={<LabelIcon />} />
              <MarkBtn
                name="Detail"
                icon={
                  <svg width={16} height={12} viewBox="0 0 16 12" fill="none" stroke="#666">
                    <circle cx={8} cy={3} r={1.800} fill="#666" />
                    <circle cx={3} cy={9} r={1.800} />
                    <circle cx={8} cy={9} r={1.800} />
                    <circle cx={13} cy={9} r={1.800} />
                  </svg>
                }
              />
              <MarkBtn
                name="Tooltip"
                icon={
                  <svg width={16} height={15} viewBox="0 0 16 15" fill="none" stroke="#555">
                    <path d="M1 1h14v9h-3v4l-4-4H1z" />
                  </svg>
                }
              />
            </div>
            <div className="mt-[9px]">
              <Pill text="SUM(Arrival D.." green icon={<SizeIcon />} />
              <Pill text="SUM(Arrival D.." green icon={<ColorDots />} />
              <Pill text="Origin" icon={<LabelIcon />} />
            </div>
          </div>
        </div>
        <div className="flex-1 flex flex-col bg-[#f5f5f5]">
          <div className="h-[27px] shrink-0 bg-[#f9f9f9] border-b border-[#d4d4d4] flex items-center text-[#555]">
            <span className="w-[126px] h-full pl-[8px] pt-[2px] flex items-center gap-[7px] border-r border-[#e6e6e6]">
              <svg width={11} height={11} viewBox="0 0 11 11" stroke="#555" strokeWidth={1.500}>
                <path d="M1.500 3v8M5.500 3v8M9.500 3v8" />
                <path d="M1.500 0v1.500M5.500 0v1.500M9.500 0v1.500" />
              </svg>
              Columns
            </span>
          </div>
          <div className="h-[7px] shrink-0" />
          <div className="h-[27px] shrink-0 bg-[#f9f9f9] border-b border-[#d4d4d4] flex items-center text-[#555]">
            <span className="w-[126px] h-full pl-[8px] pt-[2px] flex items-center gap-[7px] border-r border-[#e6e6e6]">
              <svg width={11} height={11} viewBox="0 0 11 11" stroke="#555" strokeWidth={1.500}>
                <path d="M0 1.500h2M3 1.500h8M0 5.500h2M3 5.500h8M0 9.500h2M3 9.500h8" />
              </svg>
              Rows
            </span>
          </div>
          <div className="h-[7px] shrink-0" />
          <div className="h-[830px] shrink-0 flex border-t border-[#b4b4b4] bg-white">
            <div className="w-[1352px] h-full border-r border-b border-[#cfcfcf] shrink-0">
              <div className="h-[52px] pl-[11px] pb-[2px] flex items-center text-[20px] text-[#6b6b6b]">AirportDelay</div>
              <div className="pl-[15px]">
                <Treemap />
              </div>
            </div>
          </div>
        </div>
      </div>
      <div className="h-[30px] shrink-0 bg-[#e6e6e6] border-y border-[#d4d4d4] flex">
        <div className="w-[127px] h-full border-r border-[#d0d0d0] flex items-center pl-[7px] text-[#777]">
          <svg width={10} height={12} viewBox="0 0 10 12" fill="none" stroke="#666" className="mr-[4px]">
            <path d="M1 3c0-3 8-3 8 0v6c0 3-8 3-8 0zM1 3c0 2 8 2 8 0" />
          </svg>
          Data Source
        </div>
        <Tab w="w-[86px]">CarrierDelay</Tab>
        <Tab w="w-[86px]" active>
          AirportDelay
        </Tab>
        <Tab w="w-[32px]">
          <svg width={16} height={16} viewBox="0 0 16 16" fill="none" stroke="#666">
            <path d="M1 1h11v10H1zM4 8V6M6.500 8V3M9 8V5" />
            <path d="M12 9v6M9 12h6" strokeWidth={2} />
          </svg>
        </Tab>
        <Tab w="w-[32px]">
          <svg width={16} height={16} viewBox="0 0 16 16" fill="none" stroke="#666">
            <path d="M1 1h11v10H1zM1 6h11M6.500 1v10" />
            <path d="M12 9v6M9 12h6" strokeWidth={2} />
          </svg>
        </Tab>
        <Tab w="w-[32px]">
          <svg width={16} height={16} viewBox="0 0 16 16" fill="none" stroke="#666">
            <path d="M1 2l4 1 5-1v9l-5 1-4-1zM5 3v9" />
            <path d="M12 9v6M9 12h6" strokeWidth={2} />
          </svg>
        </Tab>
      </div>
      <div className="flex-1 bg-[#f5f5f5]" />
      <div className="absolute left-[545px] top-[342px] w-[158px] h-[53px] bg-white border border-[#ccc] shadow-[2px_2px_4px_rgba(0,0,0,0.3)] pl-[7px] pt-[8px] leading-[17px] text-[13px]">
        <div className="flex">
          <span className="w-[86px] text-[#8a8a8a] whitespace-nowrap">Origin:</span>
          <span className="text-[#333]">LAX</span>
        </div>
        <div className="flex">
          <span className="w-[86px] text-[#8a8a8a] whitespace-nowrap">Arrival Delay:</span>
          <span className="text-[#333]">555,911</span>
        </div>
      </div>
      <div className="absolute left-[1545px] top-[927px] w-[82px] h-[19px] rounded-[3px] bg-[#a9a9a5] text-white font-bold flex items-center justify-center">5 negative</div>
      <ShowMePanel />
      <Annotations />
    </div>
  );
}
